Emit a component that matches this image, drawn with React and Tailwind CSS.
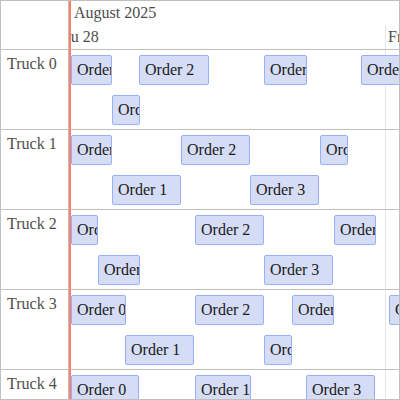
import React from 'react'

// x positions are page pixels; the timeline panel starts at x=69
const rows = [
  {
    name: 'Truck 0',
    items: [
      { x: 71, w: 41, line: 0, text: 'Order 0' },
      { x: 139, w: 70, line: 0, text: 'Order 2' },
      { x: 264, w: 43, line: 0, text: 'Order 3' },
      { x: 361, w: 60, line: 0, text: 'Order 4' },
      { x: 112, w: 28, line: 1, text: 'Order 1' },
    ],
  },
  {
    name: 'Truck 1',
    items: [
      { x: 71, w: 41, line: 0, text: 'Order 0' },
      { x: 181, w: 69, line: 0, text: 'Order 2' },
      { x: 320, w: 28, line: 0, text: 'Order 4' },
      { x: 112, w: 69, line: 1, text: 'Order 1' },
      { x: 250, w: 69, line: 1, text: 'Order 3' },
    ],
  },
  {
    name: 'Truck 2',
    items: [
      { x: 71, w: 27, line: 0, text: 'Order 0' },
      { x: 195, w: 69, line: 0, text: 'Order 2' },
      { x: 334, w: 42, line: 0, text: 'Order 4' },
      { x: 98, w: 42, line: 1, text: 'Order 1' },
      { x: 264, w: 69, line: 1, text: 'Order 3' },
    ],
  },
  {
    name: 'Truck 3',
    items: [
      { x: 71, w: 55, line: 0, text: 'Order 0' },
      { x: 195, w: 69, line: 0, text: 'Order 2' },
      { x: 292, w: 42, line: 0, text: 'Order 3' },
      { x: 389, w: 40, line: 0, text: 'Order 5' },
      { x: 125, w: 69, line: 1, text: 'Order 1' },
      { x: 264, w: 28, line: 1, text: 'Order 4' },
    ],
  },
  {
    name: 'Truck 4',
    items: [
      { x: 71, w: 68, line: 0, text: 'Order 0' },
      { x: 195, w: 56, line: 0, text: 'Order 1' },
      { x: 306, w: 69, line: 0, text: 'Order 3' },
    ],
  },
]

const PANEL_X = 69

export default function App() {
  return (
    <div
      className='relative w-[400px] h-[400px] border border-[#bfbfbf] flex overflow-hidden bg-white text-[#4d4d4d] text-[16px]'
      style={{ fontFamily: '"Liberation Serif", serif' }}
    >
      {/* labels */}
      <div className='w-[68px] shrink-0 border-r border-[#bfbfbf] flex flex-col'>
        <div className='h-[49px] shrink-0 border-b border-[#bfbfbf]'></div>
        {rows.map((r) => (
          <div key={r.name} className='h-[80px] shrink-0 border-b border-[#bfbfbf] pl-[6px] pt-[5px] leading-[18px]'>
            {r.name}
          </div>
        ))}
      </div>

      {/* timeline */}
      <div className='relative flex-1 flex flex-col overflow-hidden'>
        <div className='absolute left-[316px] top-[24px] bottom-0 w-px bg-[#e5e5e5]'></div>

        <div className='h-[49px] shrink-0 border-b border-[#bfbfbf] relative'>
          <div className='absolute left-[5px] top-[3px] leading-[18px] whitespace-nowrap'>August 2025</div>
          <div className='absolute left-[-16px] top-[27px] leading-[18px] whitespace-nowrap'>Thu 28</div>
          <div className='absolute left-[319px] top-[27px] leading-[18px] whitespace-nowrap'>Fri 29</div>
        </div>

        {rows.map((r) => (
          <div key={r.name} className='h-[80px] shrink-0 border-b border-[#bfbfbf] relative'>
            {r.items.map((it, i) => (
              <div
                key={i}
                className='absolute h-[30px] border border-[#97b0f8] bg-[#d5ddf6] rounded-[2px] overflow-hidden whitespace-nowrap px-[5px] py-[5px] leading-[18px] text-[#1a1a1a]'
                style={{ left: it.x - PANEL_X, width: it.w, top: it.line === 0 ? 5 : 45 }}
              >
                {it.text}
              </div>
            ))}
          </div>
        ))}
      </div>

      {/* current time bar */}
      <div className='absolute left-[68px] top-0 bottom-0 w-[2px] bg-[#ff7f6e]'></div>
    </div>
  )
}
